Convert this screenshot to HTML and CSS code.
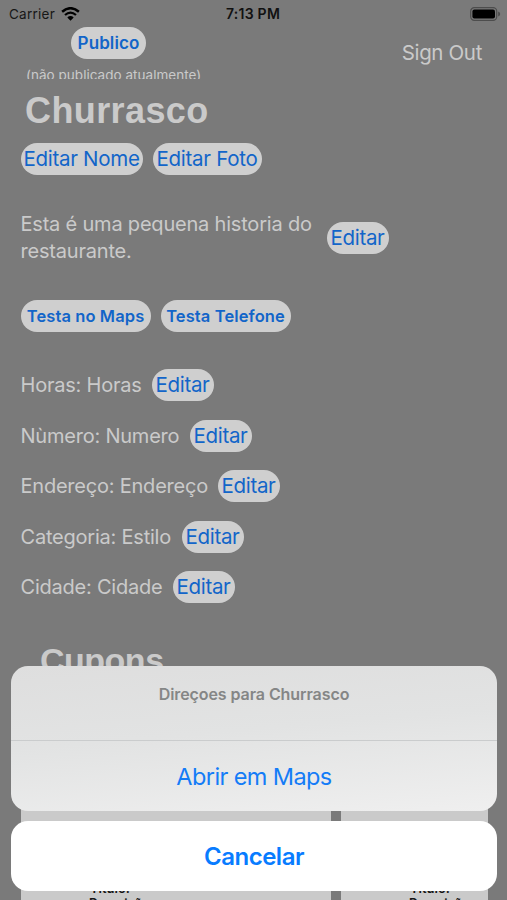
FILE: index.html
```html
<!DOCTYPE html>
<html lang="pt-BR">
<head>
<meta charset="utf-8">
<title>Churrasco</title>
<link rel="stylesheet" href="styles.css">
</head>
<body>
<main class="screen">
  <header class="status">
    <div class="carrier"><span>Carrier</span>
      <svg class="wifi" width="19" height="14" viewBox="0 0 19 14"><path d="M1.1 4.8Q9.5-2.4 17.9 4.8" fill="none" stroke="#000" stroke-width="2.5"/><path d="M4 8Q9.5 3.3 15 8" fill="none" stroke="#000" stroke-width="2.3"/><path d="M6.3 10.5Q9.5 7.6 12.7 10.5L9.5 13.7Z"/></svg>
    </div>
    <time class="time">7:13 PM</time>
    <svg class="battery" width="31" height="14" viewBox="0 0 31 14"><rect x=".7" y=".7" width="26" height="12.6" rx="3.6" fill="none" stroke="#4d4d4d" stroke-width="1.2"/><rect x="2.4" y="2.4" width="22.6" height="9.2" rx="2"/><path d="M28.2 4.6Q30.2 5.3 30.2 7T28.2 9.4Z" fill="#4d4d4d"/></svg>
  </header>
  <div class="top">
    <div class="publish">
      <button class="pill publico">Publico</button>
      <div class="note">(não publicado atualmente)</div>
    </div>
    <a class="signout">Sign Out</a>
  </div>
  <h1 class="name">Churrasco</h1>
  <div class="row actions"><button class="pill nome">Editar Nome</button><button class="pill foto">Editar Foto</button></div>
  <div class="row story"><p>Esta é uma pequena historia do<br>restaurante.</p><button class="pill">Editar</button></div>
  <div class="row tests"><button class="pill maps">Testa no Maps</button><button class="pill phone">Testa Telefone</button></div>
  <section class="fields">
    <div class="row"><span class="label horas">Horas: Horas</span><button class="pill">Editar</button></div>
    <div class="row"><span class="label numero">Nùmero: Numero</span><button class="pill">Editar</button></div>
    <div class="row"><span class="label endereco">Endereço: Endereço</span><button class="pill">Editar</button></div>
    <div class="row"><span class="label categoria">Categoria: Estilo</span><button class="pill">Editar</button></div>
    <div class="row"><span class="label cidade">Cidade: Cidade</span><button class="pill">Editar</button></div>
  </section>
  <h2 class="coupons-title">Cupons</h2>
  <section class="coupons">
    <article class="coupon"><p>Titulo:</p><p class="description">Descrição</p></article>
    <article class="coupon second"><p>Titulo:</p><p class="description">Descrição</p></article>
  </section>
  <aside class="sheet">
    <div class="options">
      <div class="sheet-title">Direçoes para Churrasco</div>
      <button class="open"><span>Abrir em Maps</span></button>
    </div>
    <button class="cancel"><span>Cancelar</span></button>
  </aside>
</main>
</body>
</html>
```
FILE: styles.css
```css
* { box-sizing: border-box; }
body { margin: 0; background: #7a7a7a; font-family: Inter, "Liberation Sans", sans-serif; }
button { font: inherit; border: 0; padding: 0; }
p, h1, h2 { margin: 0; }
.screen { position: relative; width: 507px; height: 900px; overflow: hidden; background: #7a7a7a; color: #cacaca; }
.status { height: 27px; display: grid; grid-template-columns: 1fr auto 1fr; align-items: center; padding: 0 6px 0 9px; color: #171717; font-size: 13.5px; }
.carrier { display: flex; gap: 6px; align-items: center; letter-spacing: .25px; }
.time { font-weight: 600; color: #111; font-size: 14px; letter-spacing: .25px; margin-left: -4px; }
.battery { justify-self: end; }
.top { height: 58px; display: flex; justify-content: space-between; padding: 0 25px 0 26px; }
.publish { width: 176px; height: 52px; overflow: hidden; display: flex; flex-direction: column; }
.pill { height: 32px; width: 62px; flex: none; border-radius: 16px; background: #cfcfcf; color: #1265c9; font-size: 20.5px; line-height: 32px; letter-spacing: -.32px; white-space: nowrap; text-align: center; }
.publico { width: 75px; margin-left: 45px; font-size: 17px; font-weight: 600; letter-spacing: .1px; }
.note { font-size: 13.5px; line-height: 18px; margin-top: 7px; white-space: nowrap; letter-spacing: .03px; }
.signout { font-size: 20.5px; line-height: 24px; margin-top: 14px; letter-spacing: -.35px; }
.name { height: 50px; padding-left: 25px; font: 700 36px/52px "Liberation Sans", sans-serif; letter-spacing: .4px; }
.row { display: flex; align-items: center; gap: 10px; padding-left: 20.5px; }
.actions { margin-top: 8px; }
.actions .pill { letter-spacing: -.28px; }
.nome { width: 122px; }
.foto { width: 109px; }
.story { margin-top: 37px; height: 52px; gap: 0; }
.story p { width: 306px; font-size: 20px; line-height: 27px; letter-spacing: -.2px; white-space: nowrap; }
.tests { margin-top: 36px; }
.tests .pill { width: 130px; font-size: 16.5px; font-weight: 600; letter-spacing: .1px; }
.fields { margin-top: 37px; display: grid; row-gap: 18.5px; }
.label { font-size: 20px; line-height: 32px; letter-spacing: -.22px; white-space: nowrap; }
.horas { width: 121px; }
.numero { width: 159px; }
.endereco { width: 187px; }
.categoria { width: 151px; }
.cidade { width: 142px; }
.coupons-title { margin: 36px 0 0 40px; font: 700 34px/42px "Liberation Sans", sans-serif; letter-spacing: -.5px; }
.coupons { display: flex; gap: 10px; margin: 28px 20px 0 21px; }
.coupon { width: 310px; height: 200px; flex: none; background: #cacaca; padding: 172px 0 0 69px; color: #151515; font-size: 13px; line-height: 15px; font-weight: 600; }
.coupon.second { width: 147px; }
.description { margin-left: -1px; font-size: 12.5px; letter-spacing: -.1px; }
.sheet { position: absolute; left: 11px; right: 10px; top: 666px; display: grid; gap: 10px; }
.options { height: 145px; border-radius: 17px; overflow: hidden; background: linear-gradient(175deg, #dedede, #e2e3e3 45%, #efefef); }
.sheet-title { height: 75px; padding-top: 18px; border-bottom: 1px solid #cacccd; color: #858686; font-size: 16px; line-height: 20px; font-weight: 600; text-align: center; letter-spacing: -.08px; }
.open { display: block; width: 100%; height: 70px; background: transparent; color: #147cf7; font-size: 23.5px; letter-spacing: -.6px; }
.cancel { height: 70px; border-radius: 17px; background: #fff; color: #087cff; font-size: 24px; font-weight: 600; letter-spacing: -.5px; }
```
